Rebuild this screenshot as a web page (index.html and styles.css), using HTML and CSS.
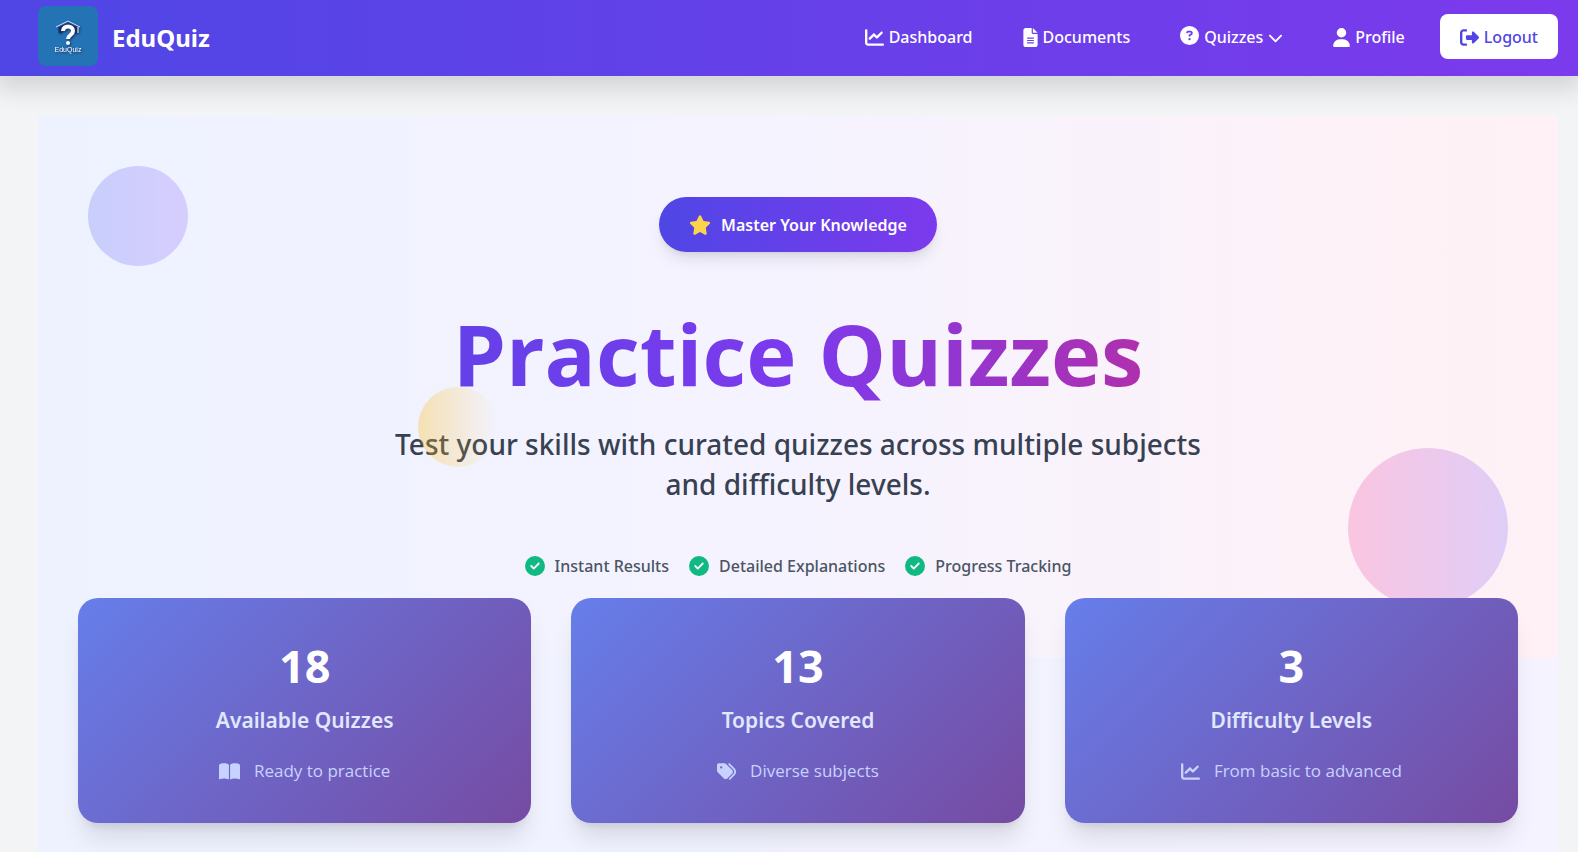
FILE: index.html
```html
<!DOCTYPE html>
<html lang="en">
<head>
<meta charset="utf-8">
<meta name="viewport" content="width=device-width, initial-scale=1">
<title>EduQuiz - Practice Quizzes</title>
<link rel="stylesheet" href="styles.css">
</head>
<body>
<svg class="sprite" aria-hidden="true">
  <symbol id="i-chart" viewBox="0 0 512 512"><path d="M64 64c0-17.700-14.300-32-32-32S0 46.300 0 64V400c0 44.200 35.800 80 80 80H480c17.700 0 32-14.300 32-32s-14.300-32-32-32H80c-8.800 0-16-7.200-16-16V64zm406.600 86.600c12.500-12.500 12.500-32.800 0-45.300s-32.800-12.500-45.300 0L320 210.700l-57.400-57.400c-12.500-12.500-32.800-12.500-45.300 0l-112 112c-12.500 12.500-12.500 32.800 0 45.300s32.800 12.500 45.300 0L240 221.300l57.400 57.400c12.500 12.500 32.800 12.500 45.300 0l128-128z"/></symbol>
  <symbol id="i-file" viewBox="0 0 384 512"><path d="M64 0C28.700 0 0 28.700 0 64V448c0 35.300 28.700 64 64 64H320c35.300 0 64-28.700 64-64V160H256c-17.700 0-32-14.300-32-32V0H64zM256 0V128H384L256 0zM112 256H272c8.800 0 16 7.200 16 16s-7.200 16-16 16H112c-8.800 0-16-7.200-16-16s7.200-16 16-16zm0 64H272c8.800 0 16 7.200 16 16s-7.200 16-16 16H112c-8.800 0-16-7.200-16-16s7.200-16 16-16zm0 64H272c8.800 0 16 7.200 16 16s-7.200 16-16 16H112c-8.800 0-16-7.200-16-16s7.200-16 16-16z"/></symbol>
  <symbol id="i-question" viewBox="0 0 512 512"><path d="M256 512A256 256 0 1 0 256 0a256 256 0 1 0 0 512zM169.800 165.300c7.900-22.300 29.100-37.300 52.800-37.300h58.300c34.900 0 63.100 28.300 63.100 63.100c0 22.600-12.100 43.500-31.700 54.800L280 264.400c-.2 13-10.900 23.600-24 23.600c-13.300 0-24-10.700-24-24V250.500c0-8.600 4.600-16.500 12.100-20.800l44.300-25.400c4.700-2.700 7.600-7.700 7.600-13.100c0-8.400-6.800-15.100-15.100-15.100H222.600c-3.400 0-6.400 2.100-7.500 5.300l-.4 1.200c-4.400 12.500-18.200 19-30.600 14.600s-19-18.200-14.600-30.600l.4-1.200zM224 352a32 32 0 1 1 64 0 32 32 0 1 1-64 0z"/></symbol>
  <symbol id="i-chevron" viewBox="0 0 512 512"><path d="M233.400 406.600c12.500 12.500 32.800 12.500 45.300 0l192-192c12.500-12.500 12.500-32.800 0-45.300s-32.800-12.500-45.300 0L256 338.700 86.600 169.400c-12.500-12.500-32.800-12.500-45.300 0s-12.500 32.800 0 45.300l192 192z"/></symbol>
  <symbol id="i-user" viewBox="0 0 448 512"><path d="M224 256A128 128 0 1 0 224 0a128 128 0 1 0 0 256zm-45.700 48C79.800 304 0 383.800 0 482.300C0 498.700 13.300 512 29.700 512H418.300c16.400 0 29.700-13.300 29.700-29.700C448 383.800 368.200 304 269.700 304H178.300z"/></symbol>
  <symbol id="i-logout" viewBox="0 0 512 512"><path d="M377.900 105.900L500.700 228.700c7.200 7.200 11.300 17.100 11.300 27.300s-4.100 20.100-11.300 27.300L377.900 406.100c-6.400 6.400-15 9.900-24 9.900c-18.700 0-33.900-15.200-33.900-33.900l0-62.100-128 0c-17.700 0-32-14.300-32-32l0-64c0-17.700 14.300-32 32-32l128 0 0-62.100c0-18.700 15.200-33.900 33.900-33.900c9 0 17.600 3.600 24 9.900zM160 96L96 96c-17.700 0-32 14.300-32 32l0 256c0 17.700 14.300 32 32 32l64 0c17.700 0 32 14.300 32 32s-14.300 32-32 32l-64 0c-53 0-96-43-96-96L0 128C0 75 43 32 96 32l64 0c17.700 0 32 14.300 32 32s-14.300 32-32 32z"/></symbol>
  <symbol id="i-star" viewBox="0 0 576 512"><path d="M316.900 18C311.600 7 300.400 0 288.100 0s-23.400 7-28.800 18L195 150.300 51.400 171.500c-12 1.800-22 10.200-25.700 21.700s-.7 24.200 7.900 32.700L137.800 329 113.200 474.700c-2 12 3 24.200 12.900 31.300s23 8 33.800 2.300l128.300-68.500 128.300 68.500c10.800 5.700 23.900 4.900 33.800-2.300s14.900-19.300 12.900-31.300L438.500 329 542.700 225.900c8.600-8.500 11.700-21.200 7.900-32.700s-13.700-19.900-25.700-21.700L381.200 150.300 316.900 18z"/></symbol>
  <symbol id="i-check" viewBox="0 0 512 512"><path d="M256 512A256 256 0 1 0 256 0a256 256 0 1 0 0 512zM369 209L241 337c-9.400 9.400-24.600 9.400-33.900 0l-64-64c-9.400-9.400-9.400-24.600 0-33.900s24.600-9.400 33.900 0l47 47L335 175c9.400-9.400 24.600-9.400 33.900 0s9.400 24.600 0 33.900z"/></symbol>
  <symbol id="i-book" viewBox="0 0 576 512"><path d="M249.600 471.500c10.800 3.800 22.400-4.100 22.400-15.500V78.600c0-4.200-1.600-8.400-5-11C247.400 52 202.400 32 144 32C93.500 32 46.300 45.300 18.100 56.100C6.800 60.500 0 71.700 0 83.800V454.100c0 11.900 12.800 20.200 24.100 16.500C55.600 460.100 105.500 448 144 448c33.900 0 79 14 105.600 23.500zm76.800 0C353 462 398.100 448 432 448c38.500 0 88.400 12.100 119.900 22.600c11.300 3.800 24.100-4.600 24.100-16.500V83.800c0-12.100-6.800-23.300-18.100-27.600C529.700 45.300 482.500 32 432 32c-58.400 0-103.400 20-123 35.600c-3.300 2.600-5 6.800-5 11V456c0 11.400 11.700 19.300 22.400 15.500z"/></symbol>
  <symbol id="i-tags" viewBox="0 0 512 512"><path d="M345 39.100L472.800 168.400c52.400 53 52.400 138.200 0 191.200L360.800 472.900c-9.300 9.400-24.500 9.500-33.900 .2s-9.500-24.500-.2-33.900L438.600 325.900c33.900-34.300 33.900-89.400 0-123.700L310.900 72.900c-9.300-9.400-9.200-24.600 .2-33.900s24.600-9.200 33.900 .2zM0 229.500V80C0 53.500 21.500 32 48 32H197.500c17 0 33.300 6.700 45.300 18.700l168 168c25 25 25 65.500 0 90.500L277.300 442.700c-25 25-65.500 25-90.500 0l-168-168C6.700 262.700 0 246.500 0 229.500zM144 144a32 32 0 1 0-64 0 32 32 0 1 0 64 0z"/></symbol>
</svg>

<header class="navbar">
  <a class="brand" href="#">
    <svg class="logo" viewBox="0 0 60 60" role="img" aria-label="EduQuiz logo">
      <rect class="logo-bg" width="60" height="60" rx="8"/>
      <g class="logo-shade">
        <path d="M22 21V27M38 21V27" stroke="#172c66" stroke-width="3"/>
        <path d="M21 21L30 17L39 21V25L30 20L21 25z" fill="#172c66"/>
        <path class="logo-cap" d="M18 21L30 15L42 21"/>
        <path class="logo-tassel" d="M40 21V27"/>
        <path class="logo-mark" d="M25 25C25 19 35 19 35 25C35 29 30 29 30 33"/>
        <circle cx="30" cy="37" r="2" fill="#fff"/>
        <text class="logo-text" x="30" y="46" text-anchor="middle">EduQuiz</text>
      </g>
    </svg>
    <span class="brand-name">EduQuiz</span>
  </a>
  <nav class="nav">
    <a class="nav-link" href="#"><svg class="icon"><use href="#i-chart"/></svg>Dashboard</a>
    <a class="nav-link" href="#"><svg class="icon icon-file"><use href="#i-file"/></svg>Documents</a>
    <button class="nav-link" type="button"><svg class="icon icon-raised"><use href="#i-question"/></svg>Quizzes<svg class="icon icon-chevron"><use href="#i-chevron"/></svg></button>
    <a class="nav-link" href="#"><svg class="icon icon-user"><use href="#i-user"/></svg>Profile</a>
    <button class="logout" type="button"><svg class="icon"><use href="#i-logout"/></svg>Logout</button>
  </nav>
</header>

<main class="page">
  <section class="hero">
    <span class="blob blob-indigo"></span>
    <span class="blob blob-pink"></span>
    <span class="blob blob-amber"></span>
    <div class="pill"><svg class="icon icon-star"><use href="#i-star"/></svg>Master Your Knowledge</div>
    <h1 class="title">Practice Quizzes</h1>
    <p class="subtitle">Test your skills with curated quizzes across multiple subjects and difficulty levels.</p>
    <ul class="features">
      <li><svg class="icon icon-check"><use href="#i-check"/></svg>Instant Results</li>
      <li><svg class="icon icon-check"><use href="#i-check"/></svg>Detailed Explanations</li>
      <li><svg class="icon icon-check"><use href="#i-check"/></svg>Progress Tracking</li>
    </ul>
  </section>
  <section class="content">
    <div class="stats">
      <article class="card">
        <strong class="number">18</strong>
        <h2 class="label">Available Quizzes</h2>
        <p class="note"><svg class="icon icon-book"><use href="#i-book"/></svg>Ready to practice</p>
      </article>
      <article class="card">
        <strong class="number">13</strong>
        <h2 class="label">Topics Covered</h2>
        <p class="note"><svg class="icon"><use href="#i-tags"/></svg>Diverse subjects</p>
      </article>
      <article class="card">
        <strong class="number">3</strong>
        <h2 class="label">Difficulty Levels</h2>
        <p class="note"><svg class="icon"><use href="#i-chart"/></svg>From basic to advanced</p>
      </article>
    </div>
  </section>
</main>
</body>
</html>
```
FILE: styles.css
```css
* { box-sizing: border-box; }
body {
  margin: 0;
  background: #f3f4f6;
  color: #374151;
  font-family: "Noto Sans", "Open Sans", sans-serif;
  font-size: 16px;
  line-height: 24px;
  overflow-x: hidden;
}
h1, h2, p, ul { margin: 0; padding: 0; }
a { color: inherit; text-decoration: none; }
button { border: 0; background: none; color: inherit; font: inherit; cursor: pointer; }
.sprite { position: absolute; width: 0; height: 0; }
.icon { width: 19px; height: 19px; flex: none; fill: currentColor; }
.icon-file { width: 15px; }
.icon-user { width: 17px; }
.icon-chevron { width: 15px; height: 15px; }
.icon-raised { margin-bottom: 4px; }

.navbar {
  position: relative;
  z-index: 2;
  display: flex;
  align-items: center;
  justify-content: space-between;
  min-height: 76px;
  padding: 6px 20px 10px 38px;
  background: linear-gradient(90deg, #4f46e5, #7c3aed);
  color: #fff;
  box-shadow: 0 8px 24px 4px rgba(0, 0, 0, .14);
}
.brand { display: flex; align-items: center; gap: 14px; }
.brand-name { padding-top: 4px; font-size: 24px; font-weight: 700; line-height: 32px; }
.logo { width: 60px; height: 60px; }
.logo-bg { fill: #2474b5; }
.logo-shade { filter: drop-shadow(1px 1px 1px #172c66); }
.logo-cap { fill: none; stroke: #d7e3f4; stroke-width: 1; }
.logo-tassel { stroke: #fff; stroke-width: 1; }
.logo-mark { fill: none; stroke: #fff; stroke-width: 4; }
.logo-text { fill: #fff; font-family: "Liberation Sans", sans-serif; font-size: 7px; }
.nav { display: flex; align-items: center; gap: 20px; font-weight: 500; }
.nav-link { display: flex; align-items: center; gap: 5px; padding: 12px 15px 10px; }
.logout {
  display: flex;
  align-items: center;
  gap: 5px;
  min-height: 45px;
  padding: 11px 20px 9px;
  border-radius: 8px;
  background: #fff;
  color: #4f46e5;
  font-weight: 500;
}

.page { padding: 40px 20px 0 38px; }
.hero {
  position: relative;
  display: flex;
  flex-direction: column;
  align-items: center;
  padding: 81px 40px 80px;
  background: linear-gradient(90deg, #eef2ff, #f5f3ff 50%, #fdf2f8 85%, #fff1f5);
}
.blob { position: absolute; border-radius: 50%; }
.blob-indigo { top: 50px; left: 50px; width: 100px; height: 100px; background: linear-gradient(90deg, #818cf8, #a78bfa); opacity: .35; }
.blob-pink { right: 50px; bottom: 50px; width: 160px; height: 160px; background: linear-gradient(90deg, #f472b6, #a78bfa); opacity: .35; }
.blob-amber { top: 50%; left: 25%; width: 80px; height: 80px; background: linear-gradient(90deg, rgba(251, 191, 36, .35), rgba(251, 146, 60, 0)); }
.pill {
  display: flex;
  align-items: center;
  gap: 10px;
  min-height: 55px;
  padding: 10px 30px;
  border-radius: 28px;
  background: linear-gradient(90deg, #4f46e5, #7c3aed);
  color: #fff;
  font-weight: 600;
  box-shadow: 0 10px 15px -3px rgba(0, 0, 0, .1), 0 4px 6px -4px rgba(0, 0, 0, .1);
}
.icon-star { width: 22px; height: 20px; color: #fcd34d; }
.title {
  width: 100%;
  max-width: 1280px;
  margin-top: 45px;
  background: linear-gradient(90deg, #4f46e5, #7c3aed 50%, #db2777);
  -webkit-background-clip: text;
  background-clip: text;
  color: transparent;
  font-family: "Open Sans", "Noto Sans", sans-serif;
  font-size: 85px;
  font-weight: 700;
  line-height: 112px;
  text-align: center;
}
.subtitle { max-width: 840px; margin-top: 15px; font-size: 28px; font-weight: 500; line-height: 40px; text-align: center; }
.features { display: flex; gap: 20px; margin-top: 50px; color: #4b5563; font-weight: 500; list-style: none; }
.features li { display: flex; align-items: center; gap: 10px; }
.icon-check { width: 20px; height: 20px; color: #10b981; }

.content { padding: 0 40px 60px; background: linear-gradient(90deg, #eef2ff, #f5f3ff); }
.stats { position: relative; display: grid; grid-template-columns: repeat(3, 1fr); gap: 40px; margin-top: -60px; }
.card {
  display: flex;
  flex-direction: column;
  align-items: center;
  padding: 40px;
  border-radius: 20px;
  background: linear-gradient(135deg, #667eea, #764ba2);
  color: #e0e7ff;
  box-shadow: 0 20px 25px -5px rgba(0, 0, 0, .1), 0 8px 10px -6px rgba(0, 0, 0, .1);
}
.number { color: #fff; font-size: 45px; font-weight: 700; line-height: 56px; }
.label { margin-top: 10px; font-size: 21px; font-weight: 600; line-height: 32px; }
.note {
  display: flex;
  align-items: center;
  gap: 14px;
  margin-top: 23px;
  color: #c7d2fe;
  font-family: "Open Sans", "Noto Sans", sans-serif;
  font-size: 17px;
}
.icon-book { width: 21px; }
```
